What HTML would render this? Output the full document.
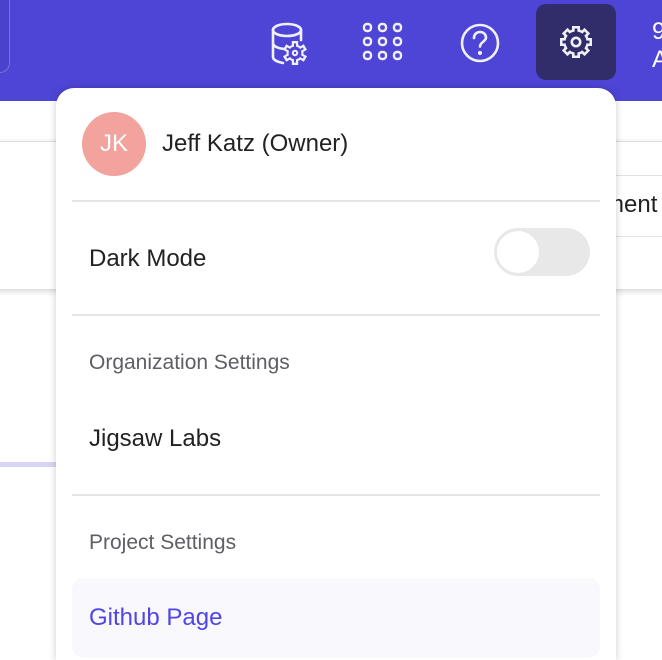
<!DOCTYPE html>
<html><head><meta charset="utf-8"><style>
*{margin:0;padding:0;box-sizing:border-box}
html,body{width:662px;height:660px;overflow:hidden}
body{background:#fff;font-family:"Liberation Sans",sans-serif;position:relative}
.hdr{position:absolute;left:0;top:0;width:662px;height:101px;background:#4e45d6}
.lbox{position:absolute;left:-20px;top:-10px;width:30px;height:83px;border:1px solid rgba(255,255,255,.25);border-radius:10px;background:#4a42cc}
.gbtn{position:absolute;left:536px;top:4px;width:80px;height:76px;background:#312d6b;border-radius:10px}
.card{position:absolute;left:-10px;top:141px;width:690px;height:148px;border-top:1px solid #ddd;background:#fff;box-shadow:0 2px 6px rgba(0,0,0,.18)}
.hl{position:absolute;height:1px;background:#e2e2e2}
.ent{position:absolute;left:604px;top:191px;font-size:24px;color:#222}
.pl{position:absolute;left:0;top:462px;width:60px;height:5px;background:#d6d5f6}
.dd{position:absolute;left:56px;top:88px;width:560px;height:572px;background:#fff;border-radius:18px 18px 0 0;box-shadow:0 0 8px rgba(0,0,0,.2)}
.av{position:absolute;left:82px;top:112px;width:64px;height:64px;border-radius:50%;background:#f2a39d;color:#fff;font-size:24px;text-align:center;line-height:64px}
.t{position:absolute;font-size:24px;color:#222;white-space:nowrap}
.s{position:absolute;font-size:21px;color:#5e5e63;white-space:nowrap}
.div{position:absolute;left:72px;width:528px;height:2px;background:#e6e6e6}
.tg{position:absolute;left:494px;top:228px;width:96px;height:48px;border-radius:24px;background:#e8e8e8}
.tg i{position:absolute;left:3px;top:3px;width:42px;height:42px;border-radius:50%;background:#fff}
.gh{position:absolute;left:72px;top:578px;width:528px;height:80px;background:#f8f8fd;border-radius:12px}
</style></head><body>
<div class="hdr"></div>
<div class="lbox"></div>
<svg style="position:absolute;left:0;top:0" width="662" height="101" fill="none" stroke="#f0f0f8" stroke-width="2.6" stroke-linecap="round" stroke-linejoin="round">
<ellipse cx="287" cy="30" rx="14" ry="6"/>
<path d="M273 30v27c0 3 5 5 10 6M301 30v10M273 43c0 3.5 6 6 14 6"/>
<g stroke-width="2.4">
<rect x="364" y="24" width="7" height="7" rx="3"/><rect x="379" y="24" width="7" height="7" rx="3"/><rect x="394" y="24" width="7" height="7" rx="3"/>
<rect x="364" y="38" width="7" height="7" rx="3"/><rect x="379" y="38" width="7" height="7" rx="3"/><rect x="394" y="38" width="7" height="7" rx="3"/>
<rect x="364" y="52" width="7" height="7" rx="3"/><rect x="379" y="52" width="7" height="7" rx="3"/><rect x="394" y="52" width="7" height="7" rx="3"/>
</g>
<circle cx="480" cy="43" r="18"/>
<path d="M474 38c0-4 3-6 6-6s6 2 6 5.5c0 4-6 4.5-6 9"/><circle cx="480" cy="53" r="0.8" fill="#f0f0f8"/>
</svg>
<!-- small gear on database -->
<svg style="position:absolute;left:281px;top:39px" width="28" height="28" viewBox="-14 -14 28 28">
<g fill="#f0f0f8"><circle r="8.5"/>
<rect x="-3.2" y="-12" width="6.4" height="6" transform="rotate(0)"/><rect x="-3.2" y="-12" width="6.4" height="6" transform="rotate(60)"/><rect x="-3.2" y="-12" width="6.4" height="6" transform="rotate(120)"/><rect x="-3.2" y="-12" width="6.4" height="6" transform="rotate(180)"/><rect x="-3.2" y="-12" width="6.4" height="6" transform="rotate(240)"/><rect x="-3.2" y="-12" width="6.4" height="6" transform="rotate(300)"/></g>
<g fill="#4e45d6"><circle r="6.4"/>
<rect x="-1" y="-9.6" width="2" height="4" transform="rotate(0)"/><rect x="-1" y="-9.6" width="2" height="4" transform="rotate(60)"/><rect x="-1" y="-9.6" width="2" height="4" transform="rotate(120)"/><rect x="-1" y="-9.6" width="2" height="4" transform="rotate(180)"/><rect x="-1" y="-9.6" width="2" height="4" transform="rotate(240)"/><rect x="-1" y="-9.6" width="2" height="4" transform="rotate(300)"/></g>
<circle r="2.2" fill="none" stroke="#f0f0f8" stroke-width="2"/>
</svg>
<div class="gbtn"></div>
<svg style="position:absolute;left:556px;top:22px" width="40" height="40" viewBox="-20 -20 40 40">
<g fill="#f0f0f8"><circle r="13"/>
<g id="t1"><rect x="-4" y="-16" width="8" height="7"/></g>
<rect x="-4" y="-16" width="8" height="7" transform="rotate(45)"/><rect x="-4" y="-16" width="8" height="7" transform="rotate(90)"/><rect x="-4" y="-16" width="8" height="7" transform="rotate(135)"/><rect x="-4" y="-16" width="8" height="7" transform="rotate(180)"/><rect x="-4" y="-16" width="8" height="7" transform="rotate(225)"/><rect x="-4" y="-16" width="8" height="7" transform="rotate(270)"/><rect x="-4" y="-16" width="8" height="7" transform="rotate(315)"/></g>
<g fill="#312d6b"><circle r="10.5"/>
<rect x="-1.4" y="-13.5" width="2.8" height="4"/><rect x="-1.4" y="-13.5" width="2.8" height="4" transform="rotate(45)"/><rect x="-1.4" y="-13.5" width="2.8" height="4" transform="rotate(90)"/><rect x="-1.4" y="-13.5" width="2.8" height="4" transform="rotate(135)"/><rect x="-1.4" y="-13.5" width="2.8" height="4" transform="rotate(180)"/><rect x="-1.4" y="-13.5" width="2.8" height="4" transform="rotate(225)"/><rect x="-1.4" y="-13.5" width="2.8" height="4" transform="rotate(270)"/><rect x="-1.4" y="-13.5" width="2.8" height="4" transform="rotate(315)"/></g>
<circle r="4.2" fill="none" stroke="#f0f0f8" stroke-width="2.6"/>
</svg>
<div style="position:absolute;left:652px;top:18px;color:#fff;font-size:24px">9<br>A</div>
<div class="card"></div>
<div class="hl" style="left:600px;top:175px;width:62px"></div>
<div class="hl" style="left:600px;top:236px;width:62px"></div>
<div class="ent">ment</div>
<div class="pl"></div>
<div class="dd"></div>
<div class="av">JK</div>
<div class="t" style="left:162px;top:130px">Jeff Katz (Owner)</div>
<div class="div" style="top:200px"></div>
<div class="t" style="left:89px;top:245px">Dark Mode</div>
<div class="tg"><i></i></div>
<div class="div" style="top:314px"></div>
<div class="s" style="left:89px;top:351px">Organization Settings</div>
<div class="t" style="left:89px;top:425px">Jigsaw Labs</div>
<div class="div" style="top:494px"></div>
<div class="s" style="left:89px;top:531px">Project Settings</div>
<div class="gh"></div>
<div class="t" style="left:89px;top:604px;color:#4f46e5">Github Page</div>
</body></html>
